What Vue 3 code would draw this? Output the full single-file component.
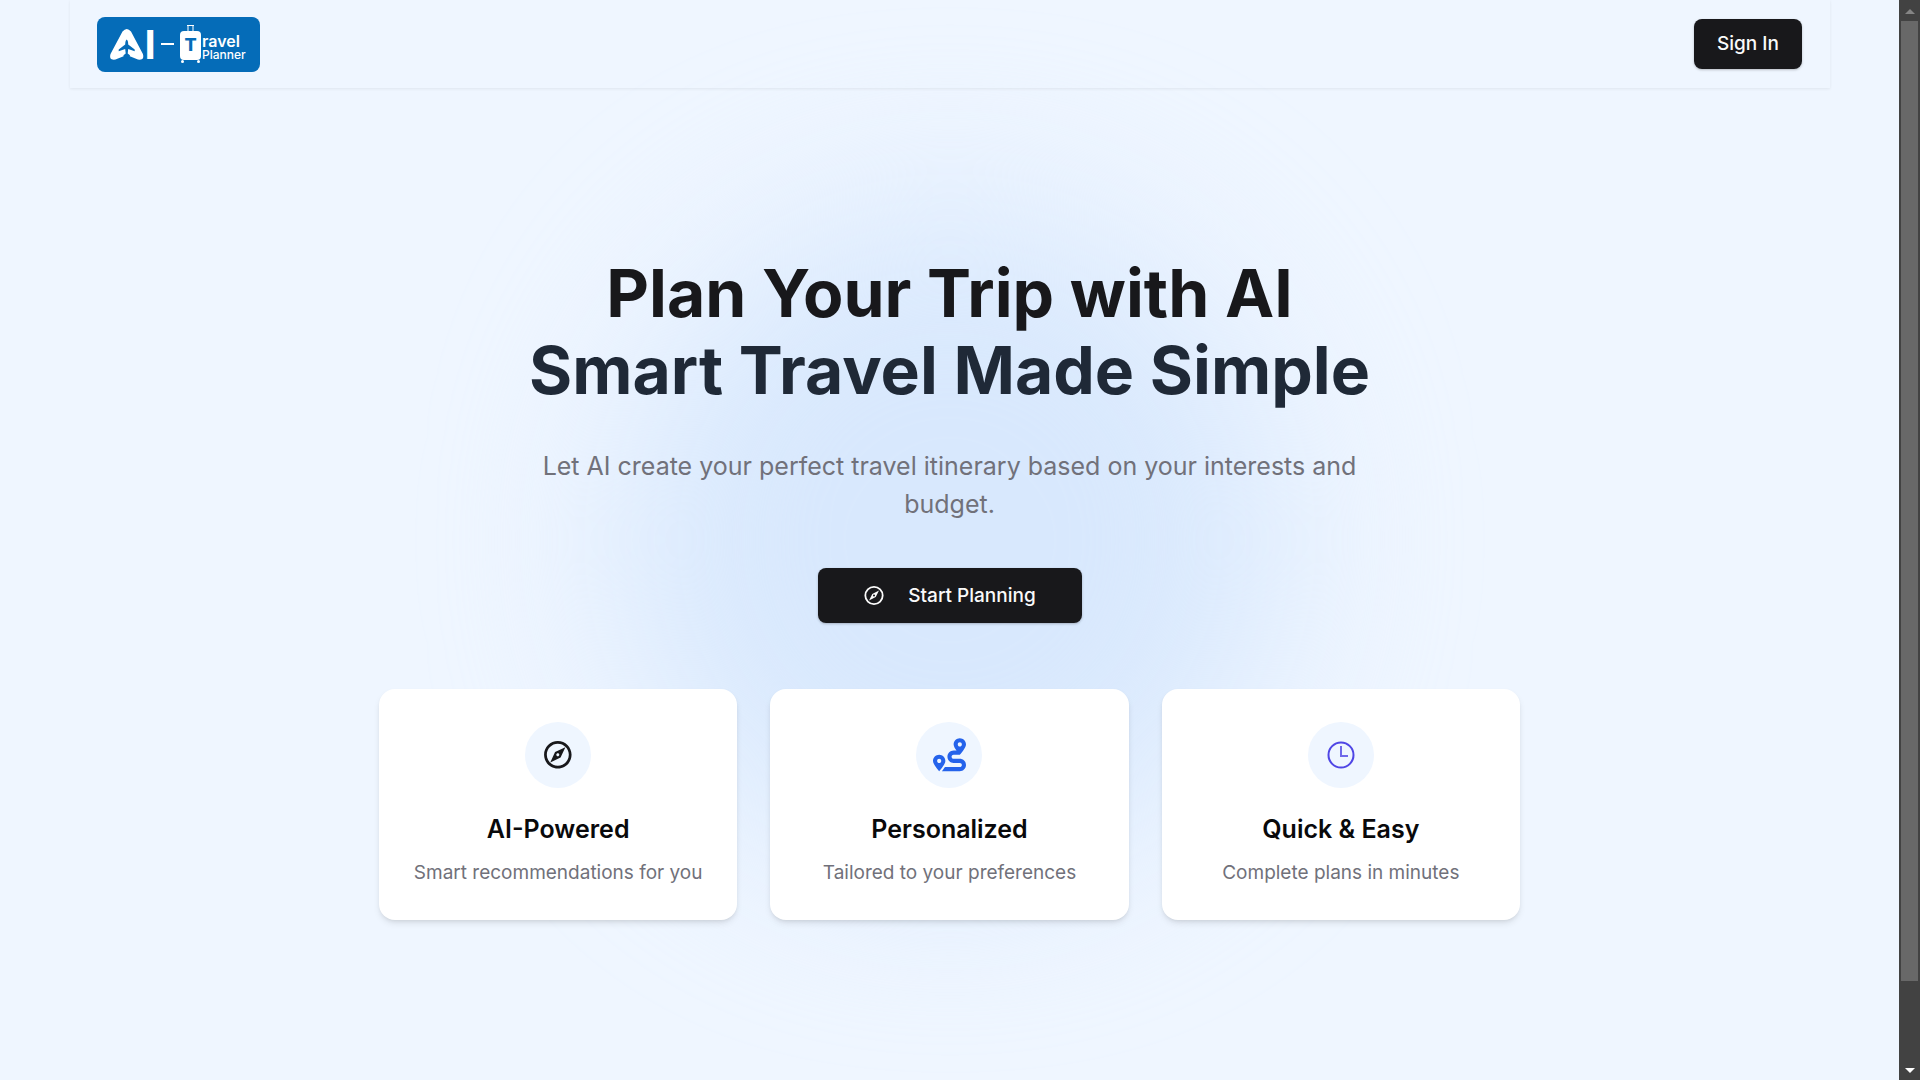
<script setup>
const features = [
  { icon: 'compass', title: 'AI-Powered', text: 'Smart recommendations for you' },
  { icon: 'route', title: 'Personalized', text: 'Tailored to your preferences' },
  { icon: 'clock', title: 'Quick & Easy', text: 'Complete plans in minutes' },
]
</script>

<template>
  <div class="shell">
    <div class="page">
      <header class="topbar">
        <a href="#" class="brand" aria-label="AI Travel Planner">
          <svg class="logo" viewBox="0 0 163 55" fill="#fff">
            <path d="M25.500 14.500q4.300-5 8.500 0L45.900 37q2.200 6.500-5 5.500l-11.200-4.500-11.200 4.500q-7.200 1-5-5.500z" />
            <path
              class="logo-cut"
              d="M29.700 22.500q1.500 1 1.500 5l6.500 5v1.800l-6.500-2.300-.5 4.500 2.200 1.700v1.200h-6.400v-1.200l2.200-1.700-.5-4.500-6.500 2.300v-1.800l6.500-5q0-4 1.500-5z"
            />
            <path class="logo-cut" d="M29.200 38h1v6h-1z" />
            <text class="logo-i" x="53" y="42" text-anchor="middle">I</text>
            <path d="M64 26h13v2H64z" />
            <path d="M90 8h7v1h-7zM90.500 9h1v6h-1zM95.500 9h1v6h-1z" />
            <rect x="83" y="14" width="21" height="29" rx="4" />
            <circle cx="85.500" cy="44.500" r="1.500" />
            <circle cx="101.500" cy="44.500" r="1.500" />
            <text class="logo-t" x="93.500" y="34" text-anchor="middle">T</text>
            <text class="logo-ravel" x="105" y="30">ravel</text>
            <text class="logo-planner" x="105" y="42">Planner</text>
          </svg>
        </a>
        <button type="button" class="btn signin">Sign In</button>
      </header>

      <main class="hero">
        <div class="glow"></div>
        <h1>Plan Your Trip with AI<span>Smart Travel Made Simple</span></h1>
        <p class="lead">Let AI create your perfect travel itinerary based on your interests and budget.</p>
        <button type="button" class="btn start">
          <svg viewBox="0 0 512 512" fill="none" stroke="currentColor">
            <circle cx="256" cy="244" r="202" stroke-width="42" />
            <path
              fill="currentColor" stroke="none" fill-rule="evenodd"
              d="M372 128 296 281 140 360 216 207zM256 220a24 24 0 1 0 0 48 24 24 0 1 0 0-48z"
            />
          </svg>
          Start Planning
        </button>

        <section class="cards">
          <article v-for="f in features" :key="f.title" class="card">
            <div class="bubble">
              <svg v-if="f.icon === 'compass'" viewBox="0.500 0.500 24 24" fill="#18181b">
                <path d="M12 2C6.490 2 2 6.490 2 12s4.490 10 10 10 10-4.490 10-10S17.510 2 12 2zm0 18c-4.410 0-8-3.590-8-8s3.590-8 8-8 8 3.590 8 8-3.590 8-8 8zm-5.500-2.500 7.510-3.490L17.500 6.500 9.990 9.990 6.500 17.500zm5.500-6.600c.61 0 1.100.49 1.100 1.100s-.49 1.100-1.100 1.100-1.100-.49-1.100-1.100.49-1.100 1.100-1.100z" />
              </svg>
              <svg v-else-if="f.icon === 'route'" viewBox="0 12 512 512" overflow="visible" fill="#2563eb">
                <path d="M416 320h-96c-17.600 0-32-14.400-32-32s14.400-32 32-32h96s96-107 96-160-43-96-96-96-96 43-96 96c0 25.500 22.200 63.400 45.300 96H320c-52.900 0-96 43.100-96 96s43.100 96 96 96h96c17.600 0 32 14.400 32 32s-14.400 32-32 32H185.500c-16 24.800-33.800 47.700-47.300 64H416c52.900 0 96-43.100 96-96s-43.100-96-96-96zm0-256c17.700 0 32 14.300 32 32s-14.300 32-32 32-32-14.300-32-32 14.300-32 32-32zM96 256c-53 0-96 43-96 96s96 160 96 160 96-107 96-160-43-96-96-96zm0 128c-17.700 0-32-14.300-32-32s14.300-32 32-32 32 14.300 32 32-14.300 32-32 32z" />
              </svg>
              <svg v-else viewBox="0 0 33 33" fill="none" stroke="#4f46e5">
                <circle cx="17" cy="16" r="12.500" stroke-width="2" />
                <path d="M17 7v10h7" stroke-width="2" stroke-opacity="0.8" />
              </svg>
            </div>
            <h2>{{ f.title }}</h2>
            <p>{{ f.text }}</p>
          </article>
        </section>
      </main>
    </div>

    <div class="scrollbar" aria-hidden="true">
      <i class="arrow up"></i>
      <div class="track"><div class="thumb"></div></div>
      <i class="arrow down"></i>
    </div>
  </div>
</template>

<style>
body {
  margin: 0;
  background: #eff6ff;
}
</style>

<style scoped>
.shell {
  display: flex;
  min-height: 100vh;
  background: #eff6ff;
  color: #09090b;
  font-family: Inter, 'Liberation Sans', sans-serif;
}
.page {
  flex: 1;
  min-width: 0;
}
.topbar {
  display: flex;
  align-items: center;
  justify-content: space-between;
  box-sizing: border-box;
  height: 88px;
  margin: 0 69px 0 70px;
  padding: 0 28px 0 27px;
  box-shadow: 0 1px 3px rgba(0, 0, 0, 0.07);
}
.brand {
  display: block;
  width: 163px;
  height: 55px;
  border-radius: 8px;
  background: #056cb8;
}
.logo {
  display: block;
}
.logo-cut,
.logo-t {
  fill: #056cb8;
}
.logo-i {
  font-size: 40px;
  font-weight: 700;
}
.logo-t {
  font-size: 18px;
  font-weight: 800;
}
.logo-ravel {
  font-size: 16px;
  font-weight: 600;
}
.logo-planner {
  font-size: 12px;
  font-weight: 500;
}
.btn {
  display: flex;
  align-items: center;
  justify-content: center;
  border: 0;
  border-radius: 8px;
  background: #18181b;
  color: #fafafa;
  box-shadow: 0 1px 3px rgba(0, 0, 0, 0.15), 0 1px 2px rgba(0, 0, 0, 0.1);
  font-family: inherit;
  font-size: 19px;
  font-weight: 500;
  line-height: 28px;
}
.signin {
  width: 108px;
  height: 50px;
}
.hero {
  position: relative;
  z-index: 0;
  display: flex;
  flex-direction: column;
  align-items: center;
  padding: 167px 24px 0;
  text-align: center;
}
.glow {
  position: absolute;
  z-index: -1;
  top: 122px;
  width: 660px;
  height: 660px;
  border-radius: 50%;
  background: #d8e8fd;
  filter: blur(88px);
}
h1 {
  margin: 0;
  color: #18181b;
  font-size: 66px;
  font-weight: 700;
  line-height: 77px;
}
h1 span {
  display: block;
  color: #1f2937;
}
.lead {
  max-width: 845px;
  margin: 38px 0 45px;
  color: #71717a;
  font-size: 25px;
  line-height: 38px;
}
.start {
  gap: 23px;
  width: 264px;
  height: 55px;
}
.start svg {
  width: 22px;
  height: 22px;
}
.cards {
  display: grid;
  grid-template-columns: repeat(3, 1fr);
  gap: 33px;
  width: 100%;
  max-width: 1141px;
  margin-top: 66px;
}
.card {
  display: flex;
  flex-direction: column;
  align-items: center;
  padding: 33px 24px;
  border-radius: 16px;
  background: #fff;
  box-shadow: 0 4px 7px -1px rgba(0, 0, 0, 0.1), 0 2px 4px -2px rgba(0, 0, 0, 0.1);
}
.bubble {
  display: flex;
  align-items: center;
  justify-content: center;
  width: 66px;
  height: 66px;
  border-radius: 50%;
  background: #eff6ff;
}
.bubble svg {
  width: 33px;
  height: 33px;
}
h2 {
  margin: 22px 0 11px;
  font-size: 25px;
  font-weight: 600;
  line-height: 38px;
}
.card p {
  margin: 0;
  color: #71717a;
  font-size: 19px;
  line-height: 28px;
}
.scrollbar {
  display: flex;
  flex-direction: column;
  align-items: center;
  width: 21px;
  background: #424242;
}
.arrow {
  margin: 9px 0 7px;
  border: solid transparent;
  border-width: 0 5px 5px;
}
.up {
  border-bottom-color: #858585;
}
.down {
  border-width: 5px 5px 0;
  border-top-color: #fff;
}
.track {
  flex: 1;
  width: 17px;
}
.thumb {
  height: 92.5%;
  background: #686868;
}
</style>
